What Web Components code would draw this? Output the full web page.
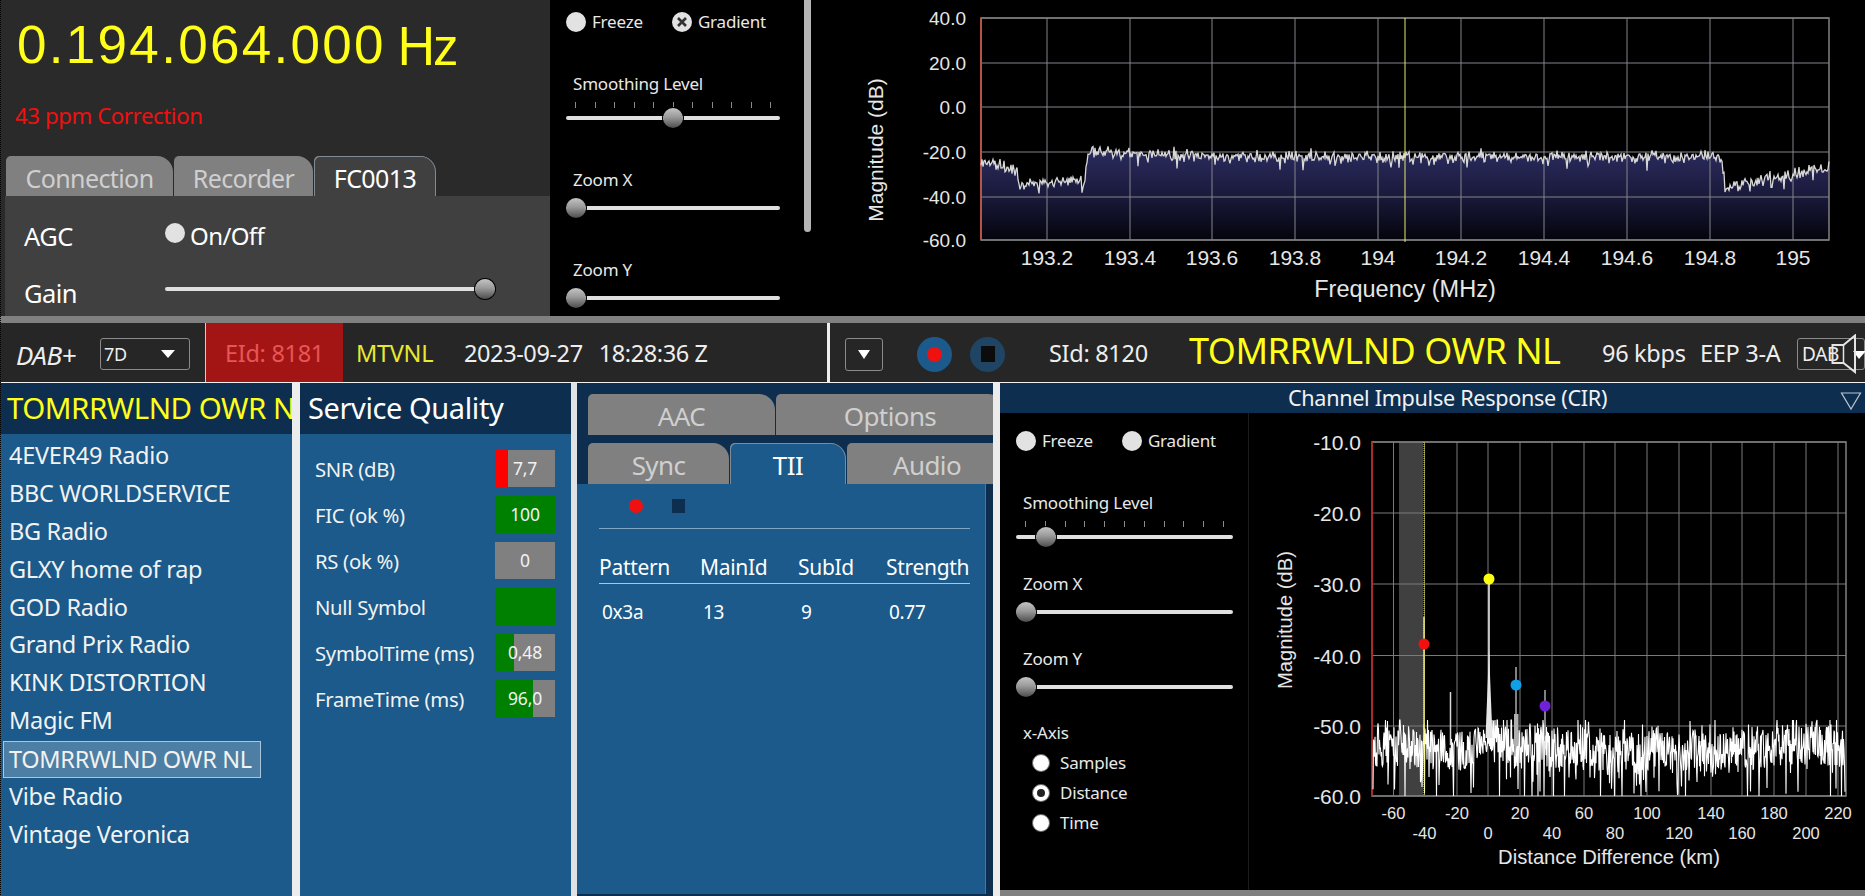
<!DOCTYPE html>
<html>
<head>
<meta charset="utf-8">
<title>DAB receiver</title>
<style>
  html, body { margin: 0; height: 896px; overflow: hidden; background: #000; }
  body { font-family: "Noto Sans", "Open Sans", sans-serif; color: #fff; }
</style>
</head>
<body>
<dab-app></dab-app>
<script>
// small seeded random so the traces look the same on every load
function seeded(a) {
    return () => {
        a |= 0; a = a + 0x6D2B79F5 | 0;
        let t = Math.imul(a ^ a >>> 15, 1 | a);
        t = t + Math.imul(t ^ t >>> 7, 61 | t) ^ t;
        return ((t ^ t >>> 14) >>> 0) / 4294967296;
    };
}

class RadioDot extends HTMLElement {
    constructor() {
        super();
        this.attachShadow({ mode: 'open' });
    }
    connectedCallback() {
        const kind = this.getAttribute('kind') || 'plain';
        this.shadowRoot.innerHTML = `
            <style>
                :host { display: inline-flex; align-items: center; gap: 6px; font-size: 17px; letter-spacing: -0.2px; line-height: 20px; color: #e8e8e8; }
                .dot { width: 20px; height: 20px; border-radius: 50%; background: #e2e2e2; position: relative; flex: none; }
                .dot svg { position: absolute; left: 0; top: 0; }
                :host([kind="small"]) .dot, :host([kind="on"]) .dot { width: 16px; height: 16px; background: #fff; border: 1px solid #666; }
                :host([kind="small"]), :host([kind="on"]) { gap: 10px; }
                :host([kind="on"]) .dot::after { content: ''; position: absolute; left: 4px; top: 4px; width: 8px; height: 8px; border-radius: 50%; background: #222; }
            </style>
            <span class="dot">${kind === 'x' ? '<svg width="20" height="20" viewBox="0 0 20 20"><path d="M6 6l8 8M14 6l-8 8" stroke="#333" stroke-width="2.6" fill="none"/></svg>' : ''}</span>
            <span><slot></slot></span>`;
    }
}
customElements.define('radio-dot', RadioDot);

class RangeSlider extends HTMLElement {
    constructor() {
        super();
        this.attachShadow({ mode: 'open' });
    }
    connectedCallback() {
        const value = parseFloat(this.getAttribute('value') || '0');
        const ticks = this.hasAttribute('ticks');
        let marks = '';
        if (ticks) {
            for (let i = 0; i < 11; i++) marks += '<i></i>';
        }
        this.shadowRoot.innerHTML = `
            <style>
                :host { display: block; width: var(--track, 214px); }
                .label { display: block; font-size: 17px; letter-spacing: -0.2px; line-height: 20px; color: #e8e8e8; padding-left: 7px; white-space: nowrap; }
                .ticks { display: flex; justify-content: space-between; padding: 0 9px; height: 6px; margin-top: 8px; }
                .ticks i { width: 1px; height: 6px; background: #8a8a8a; }
                .track { height: 20px; margin-top: ${ticks ? '0' : '8px'}; position: relative; }
                .track::before { content: ''; position: absolute; left: 0; right: 0; top: 8px; height: 4px; border-radius: 2px; background: #e0e0e0; }
                .thumb { position: absolute; top: 0; width: 20px; height: 20px; border-radius: 50%; background: linear-gradient(#c4c4c4, #9a9a9a 45%, #4c4c4c); box-shadow: 0 0 0 1px #000; }
            </style>
            <span class="label"><slot></slot></span>
            ${ticks ? `<div class="ticks">${marks}</div>` : ''}
            <div class="track"><span class="thumb" style="left: calc((100% - 20px) * ${value})"></span></div>`;
    }
}
customElements.define('range-slider', RangeSlider);

class ScopeControls extends HTMLElement {
    constructor() {
        super();
        this.attachShadow({ mode: 'open' });
    }
    connectedCallback() {
        const checked = this.getAttribute('gradient') === 'on';
        this.shadowRoot.innerHTML = `
            <style>
                :host { display: block; box-sizing: border-box; height: 100%; background: #000; padding: var(--top, 12px) 0 0 16px; --track: var(--w, 214px); }
                .radios { display: flex; gap: 29px; margin-bottom: 42px; }
                .stack { display: flex; flex-direction: column; gap: var(--gap, 42px); }
            </style>
            <div class="radios">
                <radio-dot>Freeze</radio-dot>
                <radio-dot kind="${checked ? 'x' : 'plain'}">Gradient</radio-dot>
            </div>
            <div class="stack">
                <range-slider ticks value="${this.getAttribute('smooth') || 0}">Smoothing Level</range-slider>
                <range-slider value="0">Zoom X</range-slider>
                <range-slider value="0">Zoom Y</range-slider>
                <slot></slot>
            </div>`;
    }
}
customElements.define('scope-controls', ScopeControls);

class TabStrip extends HTMLElement {
    constructor() {
        super();
        this.attachShadow({ mode: 'open' });
    }
    connectedCallback() {
        const names = this.getAttribute('tabs').split(',');
        const active = this.getAttribute('active');
        const widths = this.getAttribute('widths').split(',').map(w => w + 'px').join(' ');
        const tabs = names.map(name => `<div class="tab ${name === active ? 'on' : ''}">${name}</div>`).join('');
        this.shadowRoot.innerHTML = `
            <style>
                :host { display: grid; grid-template-columns: ${widths}; column-gap: 1px; height: 41px; font-size: var(--tab-size, 25px); overflow: hidden; }
                .tab { background: #808080; color: #cfcfcf; border-radius: 5px 16px 0 0; display: flex; align-items: center; justify-content: center; line-height: 41px; padding-top: 2px; box-sizing: border-box; white-space: nowrap; letter-spacing: -0.6px; }
                .on { background: var(--tab-on, #404040); color: #fff; box-shadow: inset 1px 1px 0 #7f8b95, inset -1px 0 0 #7f8b95; }
            </style>
            ${tabs}`;
    }
}
customElements.define('tab-strip', TabStrip);

class FreqPanel extends HTMLElement {
    constructor() {
        super();
        this.attachShadow({ mode: 'open' });
    }
    connectedCallback() {
        this.shadowRoot.innerHTML = `
            <style>
                :host { display: flex; flex-direction: column; width: 550px; height: 316px; background: #2a2a2a; box-sizing: border-box; }
                .freq { flex: none; height: 92px; padding: 18px 0 0 17px; box-sizing: border-box; display: flex; gap: 11px; color: #ffff1a; font: 53px/54px "Liberation Sans", sans-serif; letter-spacing: 2.3px; }
                .freq span { letter-spacing: -3px; font-family: "Noto Sans", sans-serif; }
                .ppm { flex: none; height: 64px; padding: 10px 0 0 15px; box-sizing: border-box; color: #f01010; font-size: 22.2px; line-height: 28px; letter-spacing: -0.4px; }
                tab-strip { flex: none; margin-left: 6px; }
                .body { flex: 1; min-height: 0; overflow: hidden; margin: -1px 0 0 5px; background: #404040; padding: 11px 0 0 19px; display: grid; grid-template-columns: 141px 1fr; grid-auto-rows: 57px; align-items: center; font-size: 25.5px; letter-spacing: -0.6px; }
                .row { display: flex; align-items: center; gap: 5px; font-size: 24px; }
                .dot { width: 20px; height: 20px; border-radius: 50%; background: #e2e2e2; margin-top: -6px; }
                .wrap { width: 330px; margin-top: -15px; }
            </style>
            <div class="freq">0.194.064.000<span>Hz</span></div>
            <div class="ppm">43 ppm Correction</div>
            <tab-strip tabs="Connection,Recorder,FC0013" active="FC0013" widths="167,139,122"></tab-strip>
            <div class="body">
                <div>AGC</div>
                <div class="row"><span class="dot"></span>On/Off</div>
                <div>Gain</div>
                <div class="wrap"><range-slider value="1" style="--track:330px"></range-slider></div>
            </div>`;
    }
}
customElements.define('freq-panel', FreqPanel);

class SpectrumChart extends HTMLElement {
    constructor() {
        super();
        this.attachShadow({ mode: 'open' });
    }
    trace() {
        const rnd = seeded(194064);
        const pts = [];
        for (let x = 981; x <= 1829; x += 1) {
            let base;
            if (x < 1014) base = 161 + (x - 981) * 0.2;
            else if (x < 1020) base = 168 + (x - 1014) * 2.8;
            else if (x < 1086) base = 184 - (x - 1020) * 0.05;
            else if (x < 1088) base = 168;
            else if (x < 1200) base = 152 + (x - 1088) * 0.035;
            else if (x < 1723) base = 157;
            else if (x < 1725) base = 172;
            else base = 188 - (x - 1725) * 0.2;
            let n = (rnd() + rnd() - 1) * 7;
            if (rnd() < 0.04) n += 8;
            if (rnd() < 0.03) n -= 5;
            pts.push([x, (base + n).toFixed(1)]);
        }
        return pts;
    }
    connectedCallback() {
        const left = 981, right = 1829, top = 18, bottom = 240;
        const ys = [[18, '40.0'], [63, '20.0'], [107, '0.0'], [152, '-20.0'], [197, '-40.0'], [240, '-60.0']];
        const xs = [[1047, '193.2'], [1130, '193.4'], [1212, '193.6'], [1295, '193.8'], [1378, '194'], [1461, '194.2'], [1544, '194.4'], [1627, '194.6'], [1710, '194.8'], [1793, '195']];
        const pts = this.trace();
        const line = pts.map((p, i) => (i ? 'L' : 'M') + p[0] + ' ' + p[1]).join('');
        const grid = ys.map(y => `<line x1="${left}" x2="${right}" y1="${y[0]}" y2="${y[0]}"/>`).join('')
            + xs.map(x => `<line x1="${x[0]}" x2="${x[0]}" y1="${top}" y2="${bottom}"/>`).join('');
        const yLabels = ys.map(y => `<text x="966" y="${y[0] + 7}" text-anchor="end">${y[1]}</text>`).join('');
        const xLabels = xs.map(x => `<text class="x" x="${x[0]}" y="265" text-anchor="middle">${x[1]}</text>`).join('');
        this.shadowRoot.innerHTML = `
            <style>
                :host { display: block; flex: 1; height: 316px; background: #000; }
                svg { display: block; }
                text { font: 19px "Liberation Sans", sans-serif; fill: #e6e6e6; }
                .x { font-size: 21px; }
                .title { font-size: 23.5px; }
                .side { font-size: 21px; }
                .grid line { stroke: #84848c; stroke-width: 1; }
            </style>
            <svg width="1050" height="316" viewBox="815 0 1050 316">
                <defs><linearGradient id="fade" x1="0" x2="0" y1="150" y2="240" gradientUnits="userSpaceOnUse">
                    <stop offset="0" stop-color="#2b2b5e"/><stop offset="0.5" stop-color="#1a1a3c"/><stop offset="1" stop-color="#04040c"/>
                </linearGradient></defs>
                <path d="${line}L${right} ${bottom}L${left} ${bottom}Z" fill="url(#fade)"/>
                <g class="grid">${grid}</g>
                <rect x="${left}" y="${top}" width="${right - left}" height="${bottom - top}" fill="none" stroke="#808080" stroke-width="1.5"/>
                <line x1="${left}" x2="${left}" y1="${top}" y2="${bottom}" stroke="#d05040" stroke-width="1.5"/>
                <path d="${line}" fill="none" stroke="#d8d8d8" stroke-width="1.3"/>
                <line x1="1405" x2="1405" y1="${top}" y2="242" stroke="#e8e86a" stroke-width="1"/>
                ${yLabels}${xLabels}
                <text class="title" x="1405" y="297" text-anchor="middle">Frequency (MHz)</text>
                <text class="side" transform="translate(883 150) rotate(-90)" text-anchor="middle">Magnitude (dB)</text>
            </svg>`;
    }
}
customElements.define('spectrum-chart', SpectrumChart);

class StatusBar extends HTMLElement {
    constructor() {
        super();
        this.attachShadow({ mode: 'open' });
    }
    connectedCallback() {
        this.shadowRoot.innerHTML = `
            <style>
                :host { display: flex; align-items: center; height: 59px; background: #262626; border-bottom: 1px solid #f0f0f0; font-size: 23.5px; color: #eee; white-space: nowrap; overflow: hidden; position: relative; letter-spacing: -0.3px; }
                .dab { width: 100px; padding-left: 16px; box-sizing: border-box; font-style: italic; font-size: 26px; margin-top: 5px; letter-spacing: -0.5px; }
                .combo { box-sizing: border-box; height: 32px; border: 1px solid #8a8a8a; border-radius: 3px; display: flex; align-items: center; justify-content: space-between; font-size: 18px; padding: 0 14px 0 3px; margin-top: 2px; }
                .arrow { width: 0; height: 0; border-left: 7px solid transparent; border-right: 7px solid transparent; border-top: 8px solid #fff; }
                .first { width: 90px; }
                .sep1 { width: 1px; height: 100%; background: #cfcfcf; margin-left: 15px; }
                .eid { width: 137px; height: 100%; background: #a31515; color: #e85555; display: flex; align-items: center; justify-content: center; }
                .mt { color: #e8e830; margin-left: 13px; width: 108px; }
                .date { width: 363px; display: flex; gap: 16px; letter-spacing: -0.4px; }
                .sep2 { width: 3px; height: 100%; background: #eee; margin-left: 0; }
                .drop { width: 38px; height: 33px; box-sizing: border-box; border: 1px solid #8a8a8a; border-radius: 3px; display: flex; align-items: center; justify-content: center; margin: 3px 0 0 15px; }
                .drop .arrow { border-left-width: 6px; border-right-width: 6px; border-top-width: 9px; }
                .rec { width: 35px; height: 35px; border-radius: 50%; background: #1b5a8a; display: flex; align-items: center; justify-content: center; margin: 3px 0 0 34px; }
                .rec i { width: 15px; height: 15px; border-radius: 50%; background: #f01010; }
                .stop { width: 35px; height: 35px; border-radius: 50%; background: #1f4464; display: flex; align-items: center; justify-content: center; margin: 3px 0 0 18px; }
                .stop i { width: 14px; height: 16px; background: #0c0c0c; }
                .sid { margin-left: 44px; width: 140px; }
                .name { color: #ffff1a; font-size: 36px; width: 413px; letter-spacing: -0.5px; margin-top: -4px; }
                .rate { width: 98px; }
                .mode { width: 97px; }
                .last { width: 68px; padding: 0 0 0 4px; font-size: 19px; justify-content: flex-start; }
                .horn { position: absolute; left: 1830px; top: 11px; }
            </style>
            <div class="dab">DAB+</div>
            <div class="combo first">7D<span class="arrow"></span></div>
            <div class="sep1"></div>
            <div class="eid">EId: 8181</div>
            <div class="mt">MTVNL</div>
            <div class="date"><span>2023-09-27</span><span>18:28:36 Z</span></div>
            <div class="sep2"></div>
            <div class="drop"><span class="arrow"></span></div>
            <div class="rec"><i></i></div>
            <div class="stop"><i></i></div>
            <div class="sid">SId: 8120</div>
            <div class="name">TOMRRWLND OWR NL</div>
            <div class="rate">96 kbps</div>
            <div class="mode">EEP 3-A</div>
            <div class="combo last">DAB</div>
            <svg class="horn" width="35" height="40" viewBox="0 0 35 40">
                <path d="M23 17h12v1l-6 7z" fill="#fff"/>
                <path d="M2.5 11H13.5L25 1.5V38L13.5 29H2.5z" fill="none" stroke="#e4e4e4" stroke-width="2"/>
                <path d="M13.5 11V29" stroke="#e4e4e4" stroke-width="1.5"/>
            </svg>`;
    }
}
customElements.define('status-bar', StatusBar);

class ServiceList extends HTMLElement {
    constructor() {
        super();
        this.attachShadow({ mode: 'open' });
    }
    connectedCallback() {
        const items = this.getAttribute('items').split('|');
        const selected = this.getAttribute('selected');
        const rows = items.map(i => `<div class="item ${i === selected ? 'sel' : ''}">${i}</div>`).join('');
        this.shadowRoot.innerHTML = `
            <style>
                :host { display: block; width: 292px; height: 100%; background: #1b5a8a; overflow: hidden; }
                .head { height: 51px; background: #0e2e50; color: #ffff1a; font-size: 29.5px; line-height: 50px; padding-left: 7px; white-space: nowrap; overflow: hidden; letter-spacing: -0.5px; }
                .list { padding: 3px 0 0 3px; }
                .item { box-sizing: border-box; width: 258px; height: 37.9px; line-height: 37.9px; padding-left: 6px; font-size: 23.5px; color: #f2f2f2; white-space: nowrap; letter-spacing: -0.3px; }
                .sel { height: 37px; line-height: 35px; margin-top: 1px; margin-bottom: -0.1px; background: rgba(255,255,255,.22); border: 1px solid #a9c6dc; padding-left: 5px; }
            </style>
            <div class="head">${selected}</div>
            <div class="list">${rows}</div>`;
    }
}
customElements.define('service-list', ServiceList);

class QualityRow extends HTMLElement {
    constructor() {
        super();
        this.attachShadow({ mode: 'open' });
    }
    connectedCallback() {
        const fill = parseFloat(this.getAttribute('fill') || '0');
        const color = this.getAttribute('color') || '#008000';
        this.shadowRoot.innerHTML = `
            <style>
                :host { display: flex; align-items: center; justify-content: space-between; height: 37px; font-size: 20.3px; letter-spacing: -0.3px; color: #f2f2f2; }
                .bar { width: 60px; height: 37px; background: linear-gradient(90deg, ${color} ${fill}%, #808080 ${fill}%); text-align: center; line-height: 37px; font-size: 17.5px; letter-spacing: -0.2px; }
            </style>
            <span><slot></slot></span>
            <div class="bar">${this.getAttribute('value') || ''}</div>`;
    }
}
customElements.define('quality-row', QualityRow);

class QualityPanel extends HTMLElement {
    constructor() {
        super();
        this.attachShadow({ mode: 'open' });
    }
    connectedCallback() {
        this.shadowRoot.innerHTML = `
            <style>
                :host { display: block; width: 271px; height: 100%; background: #1b5a8a; }
                .head { height: 51px; background: #0e2e50; font-size: 29px; line-height: 50px; padding-left: 8px; letter-spacing: -0.4px; }
                .rows { display: flex; flex-direction: column; gap: 9px; padding: 16px 16px 0 15px; }
            </style>
            <div class="head">Service Quality</div>
            <div class="rows"><slot></slot></div>`;
    }
}
customElements.define('quality-panel', QualityPanel);

class TiiPanel extends HTMLElement {
    constructor() {
        super();
        this.attachShadow({ mode: 'open' });
    }
    connectedCallback() {
        this.shadowRoot.innerHTML = `
            <style>
                :host { display: block; width: 416px; height: 100%; background: #0e2e50; overflow: hidden; --tab-size: 26px; --tab-on: #1b5a8a; }
                .tabs { padding: 11px 0 0 11px; }
                .tabs tab-strip + tab-strip { margin-top: 8px; }
                .body { height: 410px; background: #1b5a8a; border-right: 1px solid #3f7aa6; margin-right: 7px; padding: 15px 15px 0 22px; box-sizing: border-box; font-size: 19px; letter-spacing: -0.3px; }
                .marks { display: flex; align-items: center; height: 14px; padding-left: 30px; gap: 29px; }
                .marks .r { width: 14px; height: 14px; border-radius: 50%; background: #f01010; }
                .marks .s { width: 13px; height: 14px; background: #0e2e50; }
                hr { border: 0; height: 1px; background: #7fa6c2; margin: 15px 0 0; }
                .t { display: grid; grid-template-columns: 101px 98px 88px 1fr; }
                .h { margin-top: 24px; height: 28px; line-height: 28px; border-bottom: 1px solid #a9c6dc; font-size: 21px; white-space: nowrap; padding-bottom: 2px; }
                .b { margin-top: 14px; padding-left: 3px; line-height: 28px; }
            </style>
            <div class="tabs">
                <tab-strip tabs="AAC,Options" widths="187,228"></tab-strip>
                <tab-strip tabs="Sync,TII,Audio" active="TII" widths="141,116,160"></tab-strip>
            </div>
            <div class="body">
                <div class="marks"><span class="r"></span><span class="s"></span></div>
                <hr>
                <div class="t h"><span>Pattern</span><span>MainId</span><span>SubId</span><span>Strength</span></div>
                <div class="t b"><span>0x3a</span><span>13</span><span>9</span><span>0.77</span></div>
            </div>`;
    }
}
customElements.define('tii-panel', TiiPanel);

class AxisPicker extends HTMLElement {
    constructor() {
        super();
        this.attachShadow({ mode: 'open' });
    }
    connectedCallback() {
        this.shadowRoot.innerHTML = `
            <style>
                :host { display: block; padding-left: 7px; font-size: 17px; letter-spacing: -0.2px; color: #e8e8e8; margin-top: -1px; }
                .t { line-height: 20px; margin-bottom: 10px; }
                .opts { display: flex; flex-direction: column; gap: 10px; padding-left: 9px; }
            </style>
            <div class="t">x-Axis</div>
            <div class="opts">
                <radio-dot kind="small">Samples</radio-dot>
                <radio-dot kind="on">Distance</radio-dot>
                <radio-dot kind="small">Time</radio-dot>
            </div>`;
    }
}
customElements.define('axis-picker', AxisPicker);

class CirChart extends HTMLElement {
    constructor() {
        super();
        this.attachShadow({ mode: 'open' });
    }
    noise() {
        const rnd = seeded(8120);
        let d = '';
        let drift = 0;
        for (let x = 1373; x <= 1845; x += 0.5) {
            drift += (rnd() - 0.5) * 2.4;
            drift *= 0.985;
            let y = 750 + drift + (rnd() - 0.5) * 42;
            if (rnd() < 0.13) y += 20 + rnd() * 36;
            if (rnd() < 0.1) y -= 8 + rnd() * 16;
            const dist = Math.abs(x - 1489);
            if (dist < 32) y -= (32 - dist) * 0.55;
            y = Math.min(796, Math.max(720, y));
            d += (d ? 'L' : 'M') + x + ' ' + y.toFixed(1);
        }
        return d;
    }
    connectedCallback() {
        const left = 1372, right = 1846, top = 442, bottom = 796;
        const ys = [[442, '-10.0'], [513, '-20.0'], [584, '-30.0'], [655.5, '-40.0'], [726, '-50.0'], [796, '-60.0']];
        const xs = [[1393.5, '-60', 0], [1424.5, '-40', 1], [1457, '-20', 0], [1488, '0', 1], [1520, '20', 0], [1552, '40', 1], [1584, '60', 0], [1615, '80', 1], [1647, '100', 0], [1679, '120', 1], [1711, '140', 0], [1742, '160', 1], [1774, '180', 0], [1806, '200', 1], [1838, '220', 0]];
        const grid = ys.map(y => `<line x1="${left}" x2="${right}" y1="${y[0]}" y2="${y[0]}"/>`).join('')
            + xs.map(x => `<line x1="${x[0]}" x2="${x[0]}" y1="${top}" y2="${bottom}"/>`).join('');
        const yLabels = ys.map(y => `<text class="y" x="1361" y="${y[0] + 8}" text-anchor="end">${y[1]}</text>`).join('');
        const xLabels = xs.map(x => `<text class="x" x="${x[0]}" y="${x[2] ? 839 : 819}" text-anchor="middle">${x[1]}</text>`).join('');
        this.shadowRoot.innerHTML = `
            <style>
                :host { display: block; flex: 1; background: #000; border-left: 1px solid #1c1c1c; }
                svg { display: block; }
                text { font-family: "Liberation Sans", sans-serif; fill: #e6e6e6; }
                .y { font-size: 21px; }
                .x { font-size: 16.5px; }
                .title { font-size: 20.2px; }
                .grid line { stroke: #7a7a7a; stroke-width: 1; }
            </style>
            <svg width="616" height="477" viewBox="1249 413 616 477">
                <rect x="1399" y="${top}" width="24" height="${bottom - top}" fill="#404040"/>
                <g class="grid">${grid}</g>
                <rect x="${left}" y="${top}" width="${right - left}" height="${bottom - top}" fill="none" stroke="#808080" stroke-width="1.5"/>
                <line x1="${left}" x2="${left}" y1="${top}" y2="${bottom}" stroke="#c01818" stroke-width="1.5"/>
                <path d="${this.noise()}" fill="none" stroke="#fff" stroke-width="1.1"/>
                <line x1="1424" x2="1424" y1="${top}" y2="${bottom}" stroke="#e8e830" stroke-width="1" stroke-dasharray="1 1"/>
                <path d="M1424 617V730" stroke="#e8e87a" stroke-width="1.5"/>
                <path d="M1489 579V740" stroke="#f4f4f4" stroke-width="1.5"/>
                <path d="M1485.5 738L1489 650L1492.5 738Z" fill="#e6e6e6"/>
                <path d="M1516 667V740" stroke="#d8d8d8" stroke-width="1.2"/>
                <path d="M1514 714h4.5v32h-4.5z" fill="#b0b0b0"/>
                <path d="M1545 690V750" stroke="#d8d8d8" stroke-width="1.2"/>
                <path d="M1450.5 692V745" stroke="#d8d8d8" stroke-width="1.5"/>
                <ellipse cx="1489" cy="579" rx="5.5" ry="5.5" fill="#ffff10"/>
                <ellipse cx="1424" cy="644" rx="5.5" ry="5.5" fill="#f01010"/>
                <ellipse cx="1516" cy="685" rx="5.5" ry="5.5" fill="#10a0e8"/>
                <ellipse cx="1545" cy="706" rx="5.5" ry="5.5" fill="#7020d8"/>
                ${yLabels}${xLabels}
                <text class="title" x="1609" y="864" text-anchor="middle">Distance Difference (km)</text>
                <text class="title" transform="translate(1292 620) rotate(-90)" text-anchor="middle">Magnitude (dB)</text>
            </svg>`;
    }
}
customElements.define('cir-chart', CirChart);

class CirPanel extends HTMLElement {
    constructor() {
        super();
        this.attachShadow({ mode: 'open' });
    }
    connectedCallback() {
        this.shadowRoot.innerHTML = `
            <style>
                :host { display: flex; flex-direction: column; flex: 1; height: 100%; background: #808080; position: relative; }
                .head { height: 30px; background: #0e2e50; text-align: center; line-height: 30px; font-size: 21.6px; letter-spacing: -0.3px; color: #f2f2f2; flex: none; padding-left: 30px; }
                .tri { position: absolute; right: 3px; top: 8px; }
                .main { display: flex; height: 477px; }
                scope-controls { width: 248px; --top: 18px; --gap: 27px; --w: 217px; flex: none; }
            </style>
            <div class="head">Channel Impulse Response (CIR)</div>
            <svg class="tri" width="22" height="20" viewBox="0 0 22 20"><path d="M1.5 2h19L11 18z" fill="none" stroke="#b9c4cf" stroke-width="1.2"/></svg>
            <div class="main">
                <scope-controls smooth="0.1"><axis-picker></axis-picker></scope-controls>
                <cir-chart></cir-chart>
            </div>`;
    }
}
customElements.define('cir-panel', CirPanel);

class DabApp extends HTMLElement {
    constructor() {
        super();
        this.attachShadow({ mode: 'open' });
    }
    connectedCallback() {
        this.shadowRoot.innerHTML = `
            <style>
                :host { display: flex; flex-direction: column; width: 1865px; height: 896px; overflow: hidden; position: relative; }
                .top { display: flex; height: 316px; flex: none; position: relative; background: #000; }
                .top scope-controls { width: 265px; height: 316px; flex: none; }
                .scroll { position: absolute; left: 804px; top: 0; width: 7px; height: 232px; background: #b4b4b4; border-radius: 0 0 4px 4px; }
                .split { height: 7px; background: #808080; flex: none; }
                .bottom { display: flex; flex: 1; min-height: 0; }
                .gap1 { width: 8px; background: #ececec; flex: none; }
                .gap2 { width: 6px; background: #dfe3e6; flex: none; }
                .gap3 { width: 7px; background: #ececec; flex: none; }
                .edge { position: absolute; left: 0; top: 0; width: 1px; height: 100%; background: repeating-linear-gradient(#000 0 1px, transparent 1px 2px); }
            </style>
            <div class="top">
                <freq-panel></freq-panel>
                <scope-controls smooth="0.5" gradient="on"></scope-controls>
                <spectrum-chart></spectrum-chart>
                <div class="scroll"></div>
            </div>
            <div class="split"></div>
            <status-bar></status-bar>
            <div class="bottom">
                <service-list selected="TOMRRWLND OWR NL" items="4EVER49 Radio|BBC WORLDSERVICE|BG Radio|GLXY home of rap|GOD Radio|Grand Prix Radio|KINK DISTORTION|Magic FM|TOMRRWLND OWR NL|Vibe Radio|Vintage Veronica"></service-list>
                <div class="gap1"></div>
                <quality-panel>
                    <quality-row value="7,7" fill="22" color="#ff0000">SNR (dB)</quality-row>
                    <quality-row value="100" fill="100">FIC (ok %)</quality-row>
                    <quality-row value="0" fill="0">RS (ok %)</quality-row>
                    <quality-row fill="100">Null Symbol</quality-row>
                    <quality-row value="0,48" fill="32">SymbolTime (ms)</quality-row>
                    <quality-row value="96,0" fill="64">FrameTime (ms)</quality-row>
                </quality-panel>
                <div class="gap2"></div>
                <tii-panel></tii-panel>
                <div class="gap3"></div>
                <cir-panel></cir-panel>
            </div>
            <div class="edge"></div>`;
    }
}
customElements.define('dab-app', DabApp);
</script>
</body>
</html>
